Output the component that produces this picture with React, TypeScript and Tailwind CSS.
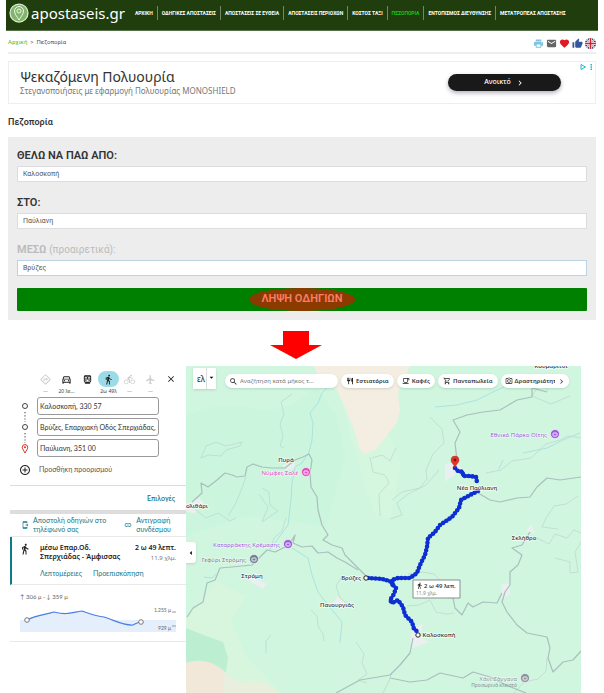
import React, { useState } from 'react';
import {
  MdAddCircleOutline, MdArrowDropDown, MdArrowLeft, MdChevronRight, MdClose, MdDirectionsBike, MdDirectionsWalk,
  MdEmail, MdFavorite, MdFlight, MdLink, MdOutlineCameraAlt, MdOutlineDirections, MdOutlineDirectionsCar,
  MdOutlineDirectionsTransit, MdOutlineLocalCafe, MdOutlineSendToMobile, MdOutlineShoppingCart,
  MdPrint, MdRestaurant, MdSearch, MdThumbUp,
} from 'react-icons/md';

const navItems = [
  'ΑΡΧΙΚΗ',
  'ΟΔΗΓΙΚΕΣ ΑΠΟΣΤΑΣΕΙΣ',
  'ΑΠΟΣΤΑΣΕΙΣ ΣΕ ΕΥΘΕΙΑ',
  'ΑΠΟΣΤΑΣΕΙΣ ΠΕΡΙΟΧΩΝ',
  'ΚΟΣΤΟΣ ΤΑΞΙ',
  'ΠΕΖΟΠΟΡΙΑ',
  'ΕΝΤΟΠΙΣΜΟΣ ΔΙΕΥΘΥΝΣΗΣ',
  'ΜΕΤΑΤΡΟΠΕΑΣ ΑΠΟΣΤΑΣΗΣ',
];

const modes = [
  { name: 'Καλύτερη', icon: MdOutlineDirections, time: '—', enabled: false },
  { name: 'Αυτοκίνητο', icon: MdOutlineDirectionsCar, time: '20 λε...', enabled: true },
  { name: 'Συγκοινωνίες', icon: MdOutlineDirectionsTransit, time: '', enabled: true },
  { name: 'Πεζή', icon: MdDirectionsWalk, time: '2ω 49λ', enabled: true },
  { name: 'Ποδήλατο', icon: MdDirectionsBike, time: '—', enabled: false },
  { name: 'Πτήσεις', icon: MdFlight, time: '—', enabled: false },
];

const chips = [
  { label: 'Εστιατόρια', icon: MdRestaurant },
  { label: 'Καφές', icon: MdOutlineLocalCafe },
  { label: 'Παντοπωλεία', icon: MdOutlineShoppingCart },
];

const roads = [
  '6,136 16,127 15,117 22,121 31,114 39,107 46,109 51,111 59,110 61,101 67,98 76,101 86,102 99,102 109,94 117,91 123,88 126,94 124,107 125,121 131,131 132,144 136,159 142,169 137,174 146,179 156,182 159,189 172,202 181,211',
  '1,251 7,242 17,236 21,217 29,214 34,202 46,201 66,199 76,189 81,184 89,186 99,181 106,174 109,169 107,177 116,181 126,180 132,187 142,186 151,192 159,196 172,204',
  '271,94 269,77 274,66 267,54 281,49 297,46 314,44 331,34 346,31 346,22 361,26',
  '292,127 304,134 314,136 331,132 344,131 351,121 361,112 374,114 395,111',
  '344,166 336,179 326,182 336,189 332,199 324,206 324,219 319,226 316,236 321,246 331,259 341,267 361,271 364,282 362,292 367,306 377,296 387,294 395,285',
  '316,227 311,237 297,236 287,241 282,237 276,249 269,242 267,232',
  '204,312 224,316 241,314 254,307 277,312 287,306 304,311 320,319 340,327',
  '150,327 174,314 204,309 214,299 224,287 227,272',
];

const paths = [
  '106,28 95,36 98,48 94,58 97,70 94,80 98,82',
  '15,92 20,80 30,76 40,80 56,76 54,80 40,84 35,90 22,89 15,92',
  '60,111 56,122 50,137 42,150',
  '73,128 82,141 76,156 92,145 84,139 83,126 76,122',
  '5,140 20,152 32,147 44,155 50,152',
  '100,152 96,165 88,172 84,184',
  '244,51 256,63 258,77 247,88 240,104 241,113 234,122 216,126 206,134',
  '253,104 240,119 222,128 211,137 216,149 204,153',
  '184,91 187,106 199,109 203,117 193,128 194,150',
  '186,92 196,89 204,95 210,82',
  '125,244 131,250 132,260 137,268 138,275',
  '170,276 178,288 176,297 181,308 172,314 181,317',
  '80,287 80,275 85,269',
  '347,170 363,178 369,168 381,172 388,164 395,167',
  '392,130 380,138 368,140 360,152 356,161 372,163',
  '221,240 233,239 244,234 250,246 260,248 268,247',
  '155,212 150,220 154,232 163,239',
  '222,208 236,206 248,208 256,216 262,232 267,232',
  '300,107 315,104 326,95 345,92 360,78 374,74 382,70 395,72',
  '362,25 355,16 346,30 365,38 384,30',
  '328,327 338,316 352,313 360,305 361,292',
  '369,192 384,196 384,207 392,206 389,186 395,176',
  '197,327 203,315 206,306',
];

const rivers = [
  '142,21 136,27 132,37 124,47 127,57 126,74 123,86 116,97 109,101 106,117 105,134 102,159 94,170 84,183',
  '106,182 122,192 126,209 132,226 142,239 156,256 154,277',
  '249,41 271,39 291,34 311,24 335,14',
  '337,87 361,82 377,74 394,67',
  '317,94 313,103',
  '18,211 26,212 30,208',
];

const routes = [
  '269,102 272,105 277,106 277,110 284,110 290,111 291,116',
  '292,125 284,129 275,134 273,142 266,151 254,159 249,166 242,172 241,181 239,189 234,199 231,207 224,212 212,212 206,214 207,219 210,222 208,228 204,234 206,237 212,234 217,241 219,249 226,256 228,263 232,266',
  '182,212 196,213 204,215 208,221',
];

const towns = [
  { name: 'Κουμαρίτσι', x: 365, y: 2 },
  { name: 'Πυρά', x: 100, y: 96 },
  { name: 'ολιθάρι', x: 11, y: 142 },
  { name: 'Νέα Παύλιανη', x: 291, y: 124 },
  { name: 'Στρόμη', x: 66, y: 212 },
  { name: 'Βρύζες', x: 165, y: 214 },
  { name: 'Πανουργιάς', x: 151, y: 241 },
  { name: 'Σκλήθρο', x: 338, y: 174 },
  { name: 'Καλοσκοπή', x: 253, y: 271 },
];

const places = [
  { name: 'Νύμφες Σαλέ', x: 120, y: 106, color: '#e34bc4' },
  { name: 'Εθνικό Πάρκο Οίτης', x: 369, y: 68, color: '#9b5bdc' },
  { name: 'Καταρράκτης Κρέμασης', x: 102, y: 178, color: '#9b5bdc' },
  { name: 'Γεφύρι Στρόμης', x: 68, y: 193, color: '#6f7f90' },
  { name: 'Χάνι Ζάγγανα', x: 339, y: 312, color: '#8a9199' },
];

const LogoMark = () => (
  <svg viewBox="0 0 40 40" className="size-5 shrink-0" aria-hidden="true">
    <circle cx="20" cy="20" r="18" fill="#82b56b" stroke="#dcebd3" strokeWidth="2.5" />
    <path d="M20 34 C16 27 11 22 11 16 a9 9 0 0 1 18 0 C29 22 24 27 20 34Z" fill="none" stroke="#eef6e9" strokeWidth="2" />
    <circle cx="20" cy="16" r="4" fill="none" stroke="#eef6e9" strokeWidth="2" />
  </svg>
);

const UkFlag = () => (
  <svg viewBox="0 0 24 24" className="size-[11px]" aria-hidden="true">
    <clipPath id="flag"><circle cx="12" cy="12" r="12" /></clipPath>
    <g clipPath="url(#flag)">
      <rect width="24" height="24" fill="#1f3a7d" />
      <path d="M0 0 24 24M24 0 0 24" stroke="#fff" strokeWidth="4" />
      <path d="M0 0 24 24M24 0 0 24" stroke="#d3202f" strokeWidth="1.2" />
      <path d="M12 0V24M0 12H24" stroke="#fff" strokeWidth="7" />
      <path d="M12 0V24M0 12H24" stroke="#d3202f" strokeWidth="3.5" />
    </g>
  </svg>
);

const Header = () => (
  <header className="mx-1.5 flex h-[31px] items-center overflow-hidden border-b border-[#56704a] bg-[#203d0e] pb-1 pl-[3px]">
    <a href="#" className="flex items-center gap-[2px] font-['Noto_Sans'] text-[15px] leading-5 text-white">
      <LogoMark />
      apostaseis.gr
    </a>
    <nav className="ml-[6px] flex items-center divide-x divide-[#71866a]">
      {navItems.map((item) => (
        <a
          key={item}
          href="#"
          className={`px-[4px] text-[5px] leading-[14px] font-bold whitespace-nowrap ${item === 'ΠΕΖΟΠΟΡΙΑ' ? 'text-[#18c418]' : 'text-white'}`}
        >
          {item}
        </a>
      ))}
    </nav>
  </header>
);

const Breadcrumb = () => (
  <div className="mx-2 flex h-[23px] items-center justify-between border-b-2 border-[#eeeeee]">
    <div className="flex gap-[3px] text-[6px] text-[#555]">
      <a href="#" className="text-[#4cb830]">Αρχική</a>
      <span>&gt;</span>
      <span>Πεζοπορία</span>
    </div>
    <div className="flex items-center gap-[2px] pt-1">
      <button type="button" aria-label="Εκτύπωση"><MdPrint size={11} color="#7ec4de" /></button>
      <button type="button" aria-label="Email"><MdEmail size={11} color="#666" /></button>
      <button type="button" aria-label="Αγαπημένα"><MdFavorite size={11} color="#e01b22" /></button>
      <button type="button" aria-label="Μου αρέσει"><MdThumbUp size={11} color="#34579c" /></button>
      <button type="button" aria-label="English"><UkFlag /></button>
    </div>
  </div>
);

const AdBanner = () => (
  <div className="relative mx-2 mt-[7px] flex h-[43px] items-center justify-between border border-[#eeeeee] pr-[34px] pl-[11px] font-['Noto_Sans']">
    <div>
      <div className="text-[14px] leading-4 text-[#333]">Ψεκαζόμενη Πολυουρία</div>
      <div className="text-[8px] leading-3 text-[#777]">Στεγανοποιήσεις με εφαρμογή Πολυουρίας MONOSHIELD</div>
    </div>
    <button type="button" className="flex h-[17px] w-[113px] items-center justify-center gap-1 rounded-full bg-[#191919] text-[7px] font-medium text-white shadow-[0_2px_4px_rgba(60,60,90,0.4)]">
      Ανοικτό
      <MdChevronRight size={10} />
    </button>
    <svg viewBox="0 0 14 6" className="absolute top-[2px] right-[1px] h-[6px] w-[14px]" aria-hidden="true">
      <path d="M1 .5 5.500 3 1 5.500Z" fill="none" stroke="#25b5c8" />
      <path d="M10.500 0h1.500v1.500h-1.500zM10.500 2.300h1.500v1.500h-1.500zM10.500 4.500h1.500v1.500h-1.500z" fill="#25b5c8" />
    </svg>
  </div>
);

interface FieldProps {
  id: string;
  label: React.ReactNode;
  initial: string;
  active?: boolean;
}

const Field: React.FC<FieldProps> = ({ id, label, initial, active = false }) => {
  const [value, setValue] = useState(initial);
  return (
    <div className="mb-3">
      <label htmlFor={id} className={`block h-[19px] text-[11px] leading-[17px] font-semibold ${active ? 'text-[#bbb]' : 'text-[#333]'}`}>
        {label}
      </label>
      <input
        id={id}
        value={value}
        onChange={(e) => setValue(e.target.value)}
        className={`block h-4 w-full border bg-white px-[5px] text-[7px] text-[#555] outline-none ${active ? 'border-[#b9d2e4]' : 'border-[#ddd]'}`}
      />
    </div>
  );
};

const SearchForm = () => (
  <form className="mx-2 bg-[#ededed] px-[9px] pt-[10px] pb-[9px]" onSubmit={(e) => e.preventDefault()}>
    <Field id="from" label="ΘΕΛΩ ΝΑ ΠΑΩ ΑΠΟ:" initial="Καλοσκοπή" />
    <Field id="to" label="ΣΤΟ:" initial="Παύλιανη" />
    <Field id="via" label={<>ΜΕΣΩ <span className="text-[10px] font-normal">(προαιρετικά):</span></>} initial="Βρύζες" active />
    <button type="submit" className="relative flex h-[23px] w-full items-center justify-center rounded-[1px] bg-[#008000] text-[11px] font-semibold text-[#ff7b6b]">
      <span className="absolute inset-y-0 left-1/2 w-[106px] -translate-x-1/2 rounded-[50%] bg-[#8b3a00]"></span>
      <span className="relative">ΛΗΨΗ ΟΔΗΓΙΩΝ</span>
    </button>
  </form>
);

const Stops = () => (
  <div className="flex gap-[7px] px-[10px]">
    <svg viewBox="0 0 10 60" className="mt-px h-[60px] w-[10px]" aria-hidden="true">
      <g fill="none" stroke="#444">
        <circle cx="5" cy="8" r="2.500" />
        <circle cx="5" cy="29" r="2.500" />
      </g>
      <path d="M5 14v10M5 35v10" stroke="#555" strokeWidth="1.200" strokeDasharray="1.200 2" />
      <path d="M5 55C4 52.500 2.300 51.500 2.300 49.300a2.700 2.700 0 0 1 5.400 0C7.700 51.500 6 52.500 5 55Z" fill="none" stroke="#d93025" />
      <circle cx="5" cy="49.300" r="1" fill="#d93025" />
    </svg>
    <div className="mr-[17px] flex min-w-0 flex-1 flex-col gap-[3px]">
      {['Καλοσκοπή, 330 57', 'Βρύζες, Επαρχιακή Οδός Σπερχιάδας, 330 57', 'Παύλιανη, 351 00'].map((stop) => (
        <input
          key={stop}
          aria-label={stop}
          defaultValue={stop}
          className="h-[18px] w-full rounded-[3px] border border-[#999] px-[2px] text-[7px] text-[#333]"
        />
      ))}
    </div>
  </div>
);

const Elevation = () => (
  <div className="border-b border-[#e8e8e8] px-[10px] pt-[7px] pb-[9px]">
    <div className="text-[6px] leading-[9px] text-[#666]">↑ 306 μ · ↓ 359 μ</div>
    <div className="relative mt-[5px]">
      <svg viewBox="0 0 156 26" className="block h-[26px] w-full" preserveAspectRatio="none" aria-hidden="true">
        <path d="M0 14H156V26H0Z" fill="#e5eefb" />
        <path d="M7 14C17 9 24 9 34 6C47 9 50 7 62 5C70 8 76 10 84 11C94 14 104 20 113 19C117 17 118 16 121 16V26H7Z" fill="#e5eefb" />
        <path d="M7 14C17 9 24 9 34 6C47 9 50 7 62 5C70 8 76 10 84 11C94 14 104 20 113 19C117 17 118 16 121 16" fill="none" stroke="#4a7fe0" strokeWidth="1.200" />
        <circle cx="7" cy="14" r="2.300" fill="#fff" stroke="#777" />
        <circle cx="121" cy="16" r="2.300" fill="#fff" stroke="#777" />
        <path d="M152 6h4M152 20h4" stroke="#999" />
      </svg>
      <span className="absolute top-px right-[5px] text-[5px] leading-[7px] text-[#666]">1.255 μ</span>
      <span className="absolute right-[5px] bottom-0 text-[5px] leading-[7px] text-[#666]">929 μ</span>
    </div>
  </div>
);

const DirectionsPanel = () => (
  <aside className="w-[176px] shrink-0 bg-white font-['Lato','Noto_Sans',sans-serif]">
    <div className="flex items-start pt-[5px] pr-[10px] pl-[25px]">
      {modes.map(({ name, icon: Icon, time, enabled }) => (
        <button key={name} type="button" aria-label={name} className="flex w-[21px] flex-col items-center">
          <span className={`flex h-4 w-[21px] items-center justify-center rounded-full ${name === 'Πεζή' ? 'bg-[#9bdbe8]' : ''}`}>
            <Icon size={11} color={enabled ? '#222' : '#ccc'} />
          </span>
          <span className={`h-[10px] font-['Noto_Sans'] text-[5px] leading-[9px] whitespace-nowrap ${enabled ? 'text-[#444]' : 'text-[#999]'}`}>{time}</span>
        </button>
      ))}
      <button type="button" aria-label="Κλείσιμο" className="ml-auto flex h-4 items-center"><MdClose size={10} color="#222" /></button>
    </div>
    <Stops />
    <button type="button" className="flex h-[27px] items-center gap-2 px-[9px] pb-[4px] text-[7px] text-[#555]">
      <MdAddCircleOutline size={12} color="#222" />
      Προσθήκη προορισμού
    </button>
    <div className="border-t border-[#ddd] pr-[11px] text-right text-[7px] leading-6 font-semibold text-[#127987]">
      <a href="#">Επιλογές</a>
    </div>
    <div className="h-1 bg-[#dddddd]"></div>
    <div className="flex h-[23px] items-center justify-between border-b border-[#e8e8e8] pr-[15px] pl-[11px] text-[7px] leading-[9px] text-[#127987]">
      <a href="#" className="flex items-center gap-1"><MdOutlineSendToMobile size={8} /><span>Αποστολή οδηγιών στο<br />τηλέφωνό σας</span></a>
      <a href="#" className="flex items-center gap-1"><MdLink size={8} /><span>Αντιγραφή<br />συνδέσμου</span></a>
    </div>
    <div className="flex h-12 border-b border-l-2 border-b-[#e8e8e8] border-l-[#127987] pt-[6px] pr-[10px] pl-[7px]">
      <MdDirectionsWalk size={12} color="#222" />
      <div className="ml-[9px] flex-1">
        <div className="flex justify-between font-['Noto_Sans'] text-[7px] leading-[9px] font-semibold whitespace-nowrap text-[#222]">
          <div>μέσω Επαρ.Οδ.<br />Σπερχιάδας - Άμφισσας</div>
          <div className="text-right">
            2 ω 49 λεπτ.
            <div className="text-[6px] leading-3 font-normal text-[#777]">11,9 χλμ.</div>
          </div>
        </div>
        <div className="mt-[5px] flex gap-[11px] text-[7px] leading-[9px] text-[#127987]">
          <a href="#">Λεπτομέρειες</a>
          <a href="#">Προεπισκόπηση</a>
        </div>
      </div>
    </div>
    <Elevation />
  </aside>
);

const MapCanvas = () => (
  <svg viewBox="0 0 395 327" preserveAspectRatio="xMidYMin slice" className="absolute inset-0 size-full font-['Noto_Sans']">
    <rect width="395" height="327" fill="#d0f6df" />
    <path d="M0 50C60 20 80 70 130 20L150 50L160 90L140 160L60 150L0 170Z" fill="#ccf5dd" />
    <path d="M151 24C168 70 170 100 190 150L204 153L215 100L204 70Z" fill="#d6f7df" />
    <path d="M30 215L60 230L45 255L60 290L95 327H0V255Z" fill="#d7f6dd" />
    <path d="M128 0L132 10L151 24L159 41L167 61L174 84L179 88L189 84L199 72L211 57L214 44L212 27L221 7L224 0Z" fill="#f3eee1" />
    <path d="M0 262L20 270L37 276L42 292L40 306L0 302Z" fill="#bcefd2" />
    <path d="M0 297C15 292 28 296 38 305V327H0Z" fill="#f1e8d9" />
    <path d="M38 305C52 322 62 312 76 316Q88 320 92 327H38Z" fill="#e8efdc" />
    <g fill="#ebeff0">
      <path d="M259 98L270 96L277 103L265 111L259 116Z" />
      <path d="M62 211L72 214L81 218L77 223L66 217Z" />
      <path d="M96 99L108 97L110 102L100 104Z" />
      <path d="M147 236L152 230L158 236L160 242L148 242Z" />
      <path d="M315 219L323 217L324 228L316 234Z" />
      <path d="M227 262L237 258L234 270L243 276L227 282L224 275Z" />
      <path d="M0 138L14 132L18 137L8 148L0 145Z" />
      <path d="M340 165L345 158L349 167Z" />
    </g>
    <g fill="none" strokeLinejoin="round">
      {paths.map((p) => <polyline key={p} points={p} stroke="#bcd9d0" strokeWidth=".8" />)}
      {rivers.map((p) => <polyline key={p} points={p} stroke="#a2dde0" strokeWidth=".8" />)}
      {roads.map((p) => <polyline key={p} points={p} stroke="#a9bfbd" strokeWidth="1.200" />)}
      {routes.map((p) => <polyline key={p} points={p} stroke="#123bd9" strokeWidth="2.600" />)}
      {routes.map((p) => <polyline key={p} points={p} stroke="#0d2fd2" strokeWidth="4.600" strokeLinecap="round" strokeDasharray="0 3.800" />)}
    </g>
    <g fill="#fff" stroke="#222" strokeWidth="1">
      <circle cx="180" cy="212" r="2.200" />
      <circle cx="232" cy="269" r="2.200" />
    </g>
    <path d="M269 102C268 98 265 97 265 94a4 4 0 0 1 8 0C273 97 270 98 269 102Z" fill="#e5352b" stroke="#b3211a" strokeWidth=".4" />
    <circle cx="269" cy="94" r="1.400" fill="#7d120d" />
    <g fontSize="6" fontWeight="500" fill="#333" stroke="#fff" strokeWidth="1.500" strokeOpacity=".7" paintOrder="stroke" textAnchor="middle">
      {towns.map((t) => <text key={t.name} x={t.x} y={t.y}>{t.name}</text>)}
    </g>
    {places.map((p) => (
      <g key={p.name}>
        <circle cx={p.x} cy={p.y} r="4.500" fill={p.color} stroke="#fff" strokeWidth=".6" />
        <rect x={p.x - 2} y={p.y - 1} width="4" height="3" rx=".6" fill="none" stroke="#fff" strokeWidth=".9" />
        <text x={p.x - 8} y={p.y + 3} fontSize="6" textAnchor="end" fill={p.color} stroke="#fff" strokeWidth="1.200" strokeOpacity=".6" paintOrder="stroke">{p.name}</text>
      </g>
    ))}
    <text x="331" y="321" fontSize="5" textAnchor="end" fill="#8a9199">Προσωρινά κλειστό</text>
    <path d="M227 214H274V232H227Z" fill="#fff" stroke="#8a8f8f" />
    <g transform="translate(230 216) scale(.3)" fill="#222">
      <path d="M13.500 5.500c1.100 0 2-.9 2-2s-.9-2-2-2-2 .9-2 2 .9 2 2 2zM9.800 8.900L7 23h2.100l1.800-8 2.100 2v6h2v-7.500l-2.100-2 .6-3C14.800 12 16.800 13 19 13v-2c-1.900 0-3.500-1-4.300-2.400l-1-1.600c-.4-.6-1-1-1.700-1-.3 0-.5.1-.8.1L6 8.300V13h2V9.600l1.800-.7" />
    </g>
    <text x="238" y="222" fontSize="6" fontWeight="500" fill="#222">2 ω 49 λεπ.</text>
    <text x="230" y="229" fontSize="5" fill="#888">11,9 χλμ.</text>
  </svg>
);

const MapView = () => (
  <section className="relative min-w-0 flex-1 overflow-hidden font-['Noto_Sans']">
    <MapCanvas />
    <div className="relative flex items-start pt-[2px] pl-[7px]">
      <div className="relative h-[21px] w-[23px] shrink-0 bg-white shadow">
        <select aria-label="Γλώσσα" className="block h-[21px] w-full appearance-none pl-1 text-[8px] leading-[21px] text-[#222]">
          <option>ελ</option>
        </select>
        <MdArrowDropDown size={9} className="pointer-events-none absolute top-[5px] right-0" />
        <span className="absolute inset-y-0 right-[9px] w-px bg-[#ddd]"></span>
      </div>
      <div className="mt-[6px] ml-[9px] flex min-w-0 items-center gap-[3px] text-[6px] font-semibold text-[#333]">
        <label className="flex h-[14px] w-[113px] shrink-0 items-center gap-[2px] rounded-full bg-white px-1 shadow">
          <MdSearch size={9} className="shrink-0" color="#222" />
          <input aria-label="Αναζήτηση" placeholder="Αναζήτηση κατά μήκος τ..." className="w-full text-[6px] font-normal outline-none placeholder:text-[#777]" />
        </label>
        {chips.map(({ label, icon: Icon }) => (
          <button key={label} type="button" className="flex h-[14px] shrink-0 items-center gap-[2px] rounded-full bg-white px-[5px] shadow">
            <Icon size={8} color="#222" />
            {label}
          </button>
        ))}
        <div className="relative h-[14px] w-[68px] shrink-0 overflow-hidden rounded-full bg-white shadow">
          <button type="button" className="flex h-full items-center gap-[2px] pl-1 whitespace-nowrap">
            <MdOutlineCameraAlt size={8} color="#222" />
            Δραστηριότητες
          </button>
          <button type="button" aria-label="Επόμενα" className="absolute inset-y-0 right-0 flex w-[14px] items-center justify-center bg-white">
            <MdChevronRight size={9} />
          </button>
        </div>
      </div>
    </div>
    <button type="button" aria-label="Σύμπτυξη" className="absolute top-[176px] left-0 flex h-[21px] w-[10px] items-center justify-center rounded-r-[3px] bg-white shadow">
      <MdArrowLeft size={12} />
    </button>
  </section>
);

export default function App() {
  return (
    <div className="flex min-h-screen flex-col bg-white font-['Roboto',sans-serif]">
      <Header />
      <Breadcrumb />
      <AdBanner />
      <h1 className="mx-2 flex h-[33px] items-center pt-1 text-[9px] font-semibold text-[#333]">Πεζοπορία</h1>
      <SearchForm />
      <div className="flex justify-center pt-[11px] pr-3 pb-[7px]">
        <svg viewBox="0 0 52 28" className="h-7 w-[52px]" aria-hidden="true">
          <path d="M13 0H39V14H52L26 28L0 14H13Z" fill="#fe0000" />
        </svg>
      </div>
      <main className="flex min-h-[327px] flex-1 pr-[23px] pl-[10px]">
        <DirectionsPanel />
        <MapView />
      </main>
    </div>
  );
}
